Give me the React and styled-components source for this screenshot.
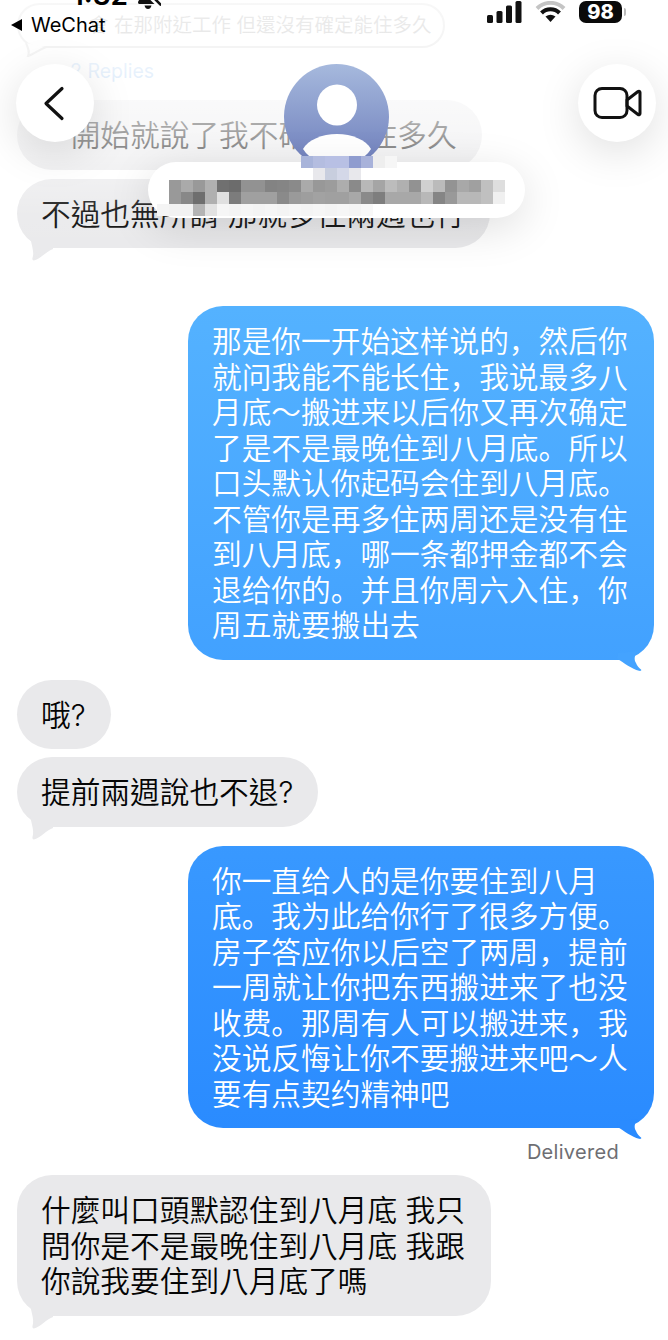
import React from "react";
import styled, { createGlobalStyle } from "styled-components";

const GlobalStyle = createGlobalStyle`
  html, body {
    margin: 0;
    padding: 0;
    background: #fff;
    overflow: hidden;
  }
`;

const Page = styled.div`
  position: relative;
  width: 668px;
  height: 1340px;
  overflow: hidden;
  background: #fff;
`;

const Thread = styled.div`
  display: flex;
  flex-direction: column;
  padding: 3px 14px 0 17px;
`;

const Bubble = styled.div`
  position: relative;
  box-sizing: border-box;
  width: fit-content;
  max-width: ${(p) => (p.$sent ? "466px" : "474px")};
  margin-top: ${(p) => p.$gap || 0}px;
  align-self: ${(p) => (p.$sent ? "flex-end" : "flex-start")};
  padding: 18px 25px 16px 24px;
  border-radius: 35px;
  font-family: Inter, ${(p) => (p.$sent ? '"Noto Sans CJK SC"' : '"Noto Sans CJK TC"')}, sans-serif;
  font-size: 29.7px;
  font-weight: 350;
  line-height: 35.5px;
  color: ${(p) => (p.$sent ? "#fff" : "#050505")};
  background: ${(p) =>
    p.$sent
      ? "linear-gradient(180deg, #54b2ff 307px, #2a8bff 1129px) fixed"
      : "#e9e9eb"};
`;

const ReplyBubble = styled.div`
  position: relative;
  box-sizing: border-box;
  width: 428px;
  height: 45px;
  padding-left: 70px;
  border: 2px solid #999;
  border-radius: 23px;
  background: #fff;
  font-family: Inter, "Noto Sans CJK TC", sans-serif;
  font-size: 19.5px;
  line-height: 41px;
  color: #111;
  white-space: nowrap;
`;

const Replies = styled.div`
  margin: 11px 0 0 53px;
  height: 41px;
  font-family: Inter, sans-serif;
  font-size: 19.5px;
  line-height: 24px;
  color: #4b97ea;
`;

const Delivered = styled.div`
  align-self: flex-end;
  margin: 13px 35px 0 0;
  height: 24px;
  font-family: Inter, sans-serif;
  font-size: 20px;
  font-weight: 400;
  letter-spacing: 0.3px;
  line-height: 22px;
  color: #6e6e73;
`;

const Tail = styled.svg`
  position: absolute;
  width: 40px;
  height: 30px;
  bottom: -13px;
  ${(p) => (p.$sent ? "right: 0;" : "left: 0;")}
`;

const ReplyTail = styled.svg`
  position: absolute;
  left: 5px;
  bottom: -11px;
  width: 24px;
  height: 14px;
`;

const Header = styled.header`
  position: absolute;
  top: 0;
  left: 0;
  right: 0;
  height: 280px;
  background: linear-gradient(
    180deg,
    rgba(255, 255, 255, 0.93) 0,
    rgba(255, 255, 255, 0.88) 70px,
    rgba(255, 255, 255, 0.62) 135px,
    rgba(255, 255, 255, 0.1) 215px,
    rgba(255, 255, 255, 0) 280px
  );
`;

const StatusBar = styled.div`
  display: flex;
  justify-content: space-between;
  height: 64px;
`;

const StatusLeft = styled.div`
  display: flex;
  flex-direction: column;
  padding-left: 11px;
`;

const TimeRow = styled.div`
  display: flex;
  align-items: flex-end;
  gap: 8px;
  height: 26px;
  margin: -18px 0 0 61px;
  font-family: Inter, sans-serif;
  font-size: 28px;
  font-weight: 600;
  line-height: 26px;
  color: #000;
`;

const BackApp = styled.div`
  display: flex;
  align-items: center;
  gap: 9px;
  margin-top: 4px;
  font-family: Inter, sans-serif;
  font-size: 20px;
  font-weight: 400;
  line-height: 26px;
  color: #000;
`;

const BackTriangle = styled.span`
  width: 0;
  height: 0;
  border-top: 6px solid transparent;
  border-bottom: 6px solid transparent;
  border-right: 11px solid #000;
`;

const StatusRight = styled.div`
  display: flex;
  align-items: flex-start;
  padding: 1px 42px 0 0;
`;

const Battery = styled.div`
  width: 43px;
  height: 22px;
  margin-left: 13px;
  border-radius: 7px;
  background: #0a0a0a;
  font-family: Inter, sans-serif;
  font-size: 20px;
  font-weight: 800;
  line-height: 22px;
  text-align: center;
  color: #fff;
`;

const BatteryNub = styled.div`
  width: 2px;
  height: 8px;
  margin: 7px 0 0 2px;
  border-radius: 0 2px 2px 0;
  background: #bbb;
`;

const Nav = styled.div`
  display: flex;
  justify-content: space-between;
  align-items: flex-start;
  padding: 0 12px 0 16px;
`;

const RoundButton = styled.div`
  display: flex;
  align-items: center;
  justify-content: center;
  width: 78px;
  height: 78px;
  border-radius: 50%;
  background: #fff;
  box-shadow: 0 10px 44px rgba(0, 0, 0, 0.13);
`;

const Contact = styled.div`
  display: flex;
  flex-direction: column;
  align-items: center;
`;

const Avatar = styled.svg`
  display: block;
  width: 105px;
  height: 105px;
`;

const NamePill = styled.div`
  position: relative;
  width: 377px;
  height: 56px;
  margin-top: -7px;
  border-radius: 28px;
  background: #fff;
  box-shadow: 0 10px 44px rgba(0, 0, 0, 0.13);
`;

const Mosaic = styled.svg`
  position: absolute;
  left: 0;
  top: -6px;
  width: 377px;
  height: 62px;
`;

const row1 = ["999","aaa","999","b0b0b0","707070","6c6c6c","929292","929292","838383","858585","8a8a8a","aaa","989898","9c9c9c","adadad","8a8a8a","b8b8b8","a5a5a5","bcbcbc","b0b0b0","929292","d0d0d0","bbb","939393","a8a8a8","a0a0a0","c0c0c0","dedede"];
const row2 = ["999","888","6e6e6e","b0b0b0","e0e0e0","7c7c7c","a0a0a0","a0a0a0","a0a0a0","8a8a8a","9a9a9a","9e9e9e","a2a2a2","a0a0a0","a0a0a0","a8a8a8","8a8a8a","7e7e7e","a8a8a8","a8a8a8","a8a8a8","b8b8b8","858585","999","b8b8b8","b8b8b8","c0c0c0","f0f0f0"];
const row0 = [[300,"a8b4da"],[312,"b4bde0"],[324,"b8c0e4"],[336,"b8c0e4"],[348,"8f9ccf"],[360,"a8b2da"],[372,"eee"],[384,"f6f6f6"]];
const rowTop = [[312,"e8e8ec"],[324,"c8cede"],[336,"d4d8e8"],[348,"e8e8ec"]];
const rowLow = [[156,"f4f4f4"],[168,"f2f2f2"],[180,"f2f2f2"],[192,"b4b4b4"],[204,"e2e2e2"],[216,"f6f6f6"],[228,"f4f4f4"],[240,"f6f6f6"],[252,"f4f4f4"],[264,"f6f6f6"],[276,"f4f4f4"],[288,"f6f6f6"],[300,"f4f4f4"],[312,"f6f6f6"],[324,"f4f4f4"],[336,"f6f6f6"],[348,"f4f4f4"],[360,"f8f8f8"]];

const PIXEL = 12;
const PILL_LEFT = 147;

const MosaicCells = () => (
  <Mosaic viewBox="0 0 377 62" shapeRendering="crispEdges">
    {row0.map(([x, c]) => (
      <rect key={"a" + x} x={x - PILL_LEFT} y="0" width={PIXEL} height={PIXEL} fill={"#" + c} />
    ))}
    {rowTop.map(([x, c]) => (
      <rect key={"b" + x} x={x - PILL_LEFT} y="12" width={PIXEL} height={PIXEL} fill={"#" + c} />
    ))}
    {row1.map((c, i) => (
      <rect key={"c" + i} x={21 + i * PIXEL} y="24" width={PIXEL} height={PIXEL} fill={"#" + c} />
    ))}
    {row2.map((c, i) => (
      <rect key={"d" + i} x={21 + i * PIXEL} y="36" width={PIXEL} height={PIXEL} fill={"#" + c} />
    ))}
    {rowLow.map(([x, c]) => (
      <rect key={"e" + x} x={x - PILL_LEFT} y="48" width={PIXEL} height={PIXEL} fill={"#" + c} />
    ))}
  </Mosaic>
);

const ReceivedTail = () => (
  <Tail viewBox="0 0 40 30">
    <path
      d="M12 0C13 10 18 20 15.5 27C15 29.5 16.5 29.8 18.5 29C24 27 30 20 36 18L36 0Z"
      fill="#e9e9eb"
    />
  </Tail>
);

const SentTail = ({ fill }) => (
  <Tail $sent viewBox="0 0 40 30">
    <path
      d="M4 10L24 8C20 12 20 17 22 20C23 23 25 25 27 26.5C28 27.5 26.5 28.2 25 27.8C18 26 10 20 3 15.5Z"
      fill={fill}
    />
  </Tail>
);

const SignalIcon = () => (
  <svg width="35" height="22" viewBox="0 0 35 22" fill="#111">
    <rect x="0" y="14" width="6" height="8" rx="1.5" />
    <rect x="9.5" y="10" width="6" height="12" rx="1.5" />
    <rect x="19" y="4.5" width="6" height="17.5" rx="1.5" />
    <rect x="28.5" y="0" width="6" height="22" rx="1.5" />
  </svg>
);

const WifiIcon = () => (
  <svg width="31" height="22" viewBox="0 0 31 22" style={{ marginLeft: 13 }}>
    <path d="M2 7.5A19 19 0 0 1 29 7.5" fill="none" stroke="#c4c4c4" strokeWidth="4" />
    <path d="M6.5 12A12.5 12.5 0 0 1 24.5 12" fill="none" stroke="#111" strokeWidth="4" />
    <path d="M10.5 15.5Q15.5 12 20.5 15.5L15.5 21Z" fill="#111" />
  </svg>
);

// only the lower part of the bell is on screen, the status bar is cut off at the top
const MutedBell = () => (
  <svg width="25" height="25" viewBox="0 0 25 25" style={{ marginBottom: -1 }}>
    <path d="M12 0C8 0 7 6 6 11C5 15 2 16 2 18.5C2 19.5 3 20 4 20H20C21 20 22 19.5 22 18.5C22 16 19 15 18 11C17 6 16 0 12 0Z" fill="#111" />
    <path d="M8.5 21.5H15.5C15 24 13.5 25 12 25C10.5 25 9 24 8.5 21.5Z" fill="#111" />
    <path d="M4 2L24 22" stroke="#fff" strokeWidth="5" />
    <path d="M5 1L24.5 20.5" stroke="#111" strokeWidth="2.6" strokeLinecap="round" />
  </svg>
);

const BackIcon = () => (
  <svg width="22" height="35" viewBox="0 0 22 35" style={{ marginRight: 2 }}>
    <path d="M19 2.5L3 17.5L19 32.5" fill="none" stroke="#111" strokeWidth="3.2" strokeLinecap="round" strokeLinejoin="round" />
  </svg>
);

const VideoIcon = () => (
  <svg width="50" height="34" viewBox="0 0 50 34">
    <rect x="3" y="2.5" width="32" height="29" rx="7" fill="none" stroke="#111" strokeWidth="3" />
    <path d="M35 14L46 5.5C47 4.8 48 5.3 48 6.5V27.5C48 28.7 47 29.2 46 28.5L35 20Z" fill="none" stroke="#111" strokeWidth="3" strokeLinejoin="round" />
  </svg>
);

const AvatarIcon = () => (
  <Avatar viewBox="0 0 105 105">
    <defs>
      <linearGradient id="avatarFill" x1="0" y1="0" x2="0" y2="1">
        <stop offset="0" stopColor="#a6b9dd" />
        <stop offset="1" stopColor="#6d7dbb" />
      </linearGradient>
    </defs>
    <circle cx="52.5" cy="52.5" r="52.5" fill="url(#avatarFill)" />
    <ellipse cx="53" cy="41" rx="20" ry="20.5" fill="#fff" />
    <path d="M19 85C24 76 38 70 53 70C68 70 82 76 87 85C80 96 66 102 53 102C40 102 26 96 19 85Z" fill="#fff" />
  </Avatar>
);

export default function App() {
  return (
    <Page>
      <GlobalStyle />
      <Thread>
        <ReplyBubble>
          會 在那附近工作 但還沒有確定能住多久
          <ReplyTail viewBox="0 0 24 14">
            <path d="M2 0C4 5 6 8 4 13C10 11 15 7 22 4" fill="#fff" stroke="#999" strokeWidth="2" />
          </ReplyTail>
        </ReplyBubble>
        <Replies>2 Replies</Replies>
        <Bubble $gap={0}>一開始就說了我不確定能住多久</Bubble>
        <Bubble $gap={9}>
          不過也無所謂 那就多住兩週也行
          <ReceivedTail />
        </Bubble>
        <Bubble $sent $gap={58}>
          那是你一开始这样说的，然后你就问我能不能长住，我说最多八月底～搬进来以后你又再次确定了是不是最晚住到八月底。所以口头默认你起码会住到八月底。不管你是再多住两周还是没有住到八月底，哪一条都押金都不会退给你的。并且你周六入住，你周五就要搬出去
          <SentTail fill="#44a3ff" />
        </Bubble>
        <Bubble $gap={20}>哦?</Bubble>
        <Bubble $gap={8}>
          提前兩週說也不退?
          <ReceivedTail />
        </Bubble>
        <Bubble $sent $gap={19}>
          你一直给人的是你要住到八月底。我为此给你行了很多方便。房子答应你以后空了两周，提前一周就让你把东西搬进来了也没收费。那周有人可以搬进来，我没说反悔让你不要搬进来吧～人要有点契约精神吧
          <SentTail fill="#2a8bff" />
        </Bubble>
        <Delivered>Delivered</Delivered>
        <Bubble $gap={10}>
          什麼叫口頭默認住到八月底 我只問你是不是最晚住到八月底 我跟你說我要住到八月底了嗎
          <ReceivedTail />
        </Bubble>
      </Thread>
      <Header>
        <StatusBar>
          <StatusLeft>
            <TimeRow>
              1:32
              <MutedBell />
            </TimeRow>
            <BackApp>
              <BackTriangle />
              WeChat
            </BackApp>
          </StatusLeft>
          <StatusRight>
            <SignalIcon />
            <WifiIcon />
            <Battery>98</Battery>
            <BatteryNub />
          </StatusRight>
        </StatusBar>
        <Nav>
          <RoundButton>
            <BackIcon />
          </RoundButton>
          <Contact>
            <AvatarIcon />
            <NamePill>
              <MosaicCells />
            </NamePill>
          </Contact>
          <RoundButton>
            <VideoIcon />
          </RoundButton>
        </Nav>
      </Header>
    </Page>
  );
}
